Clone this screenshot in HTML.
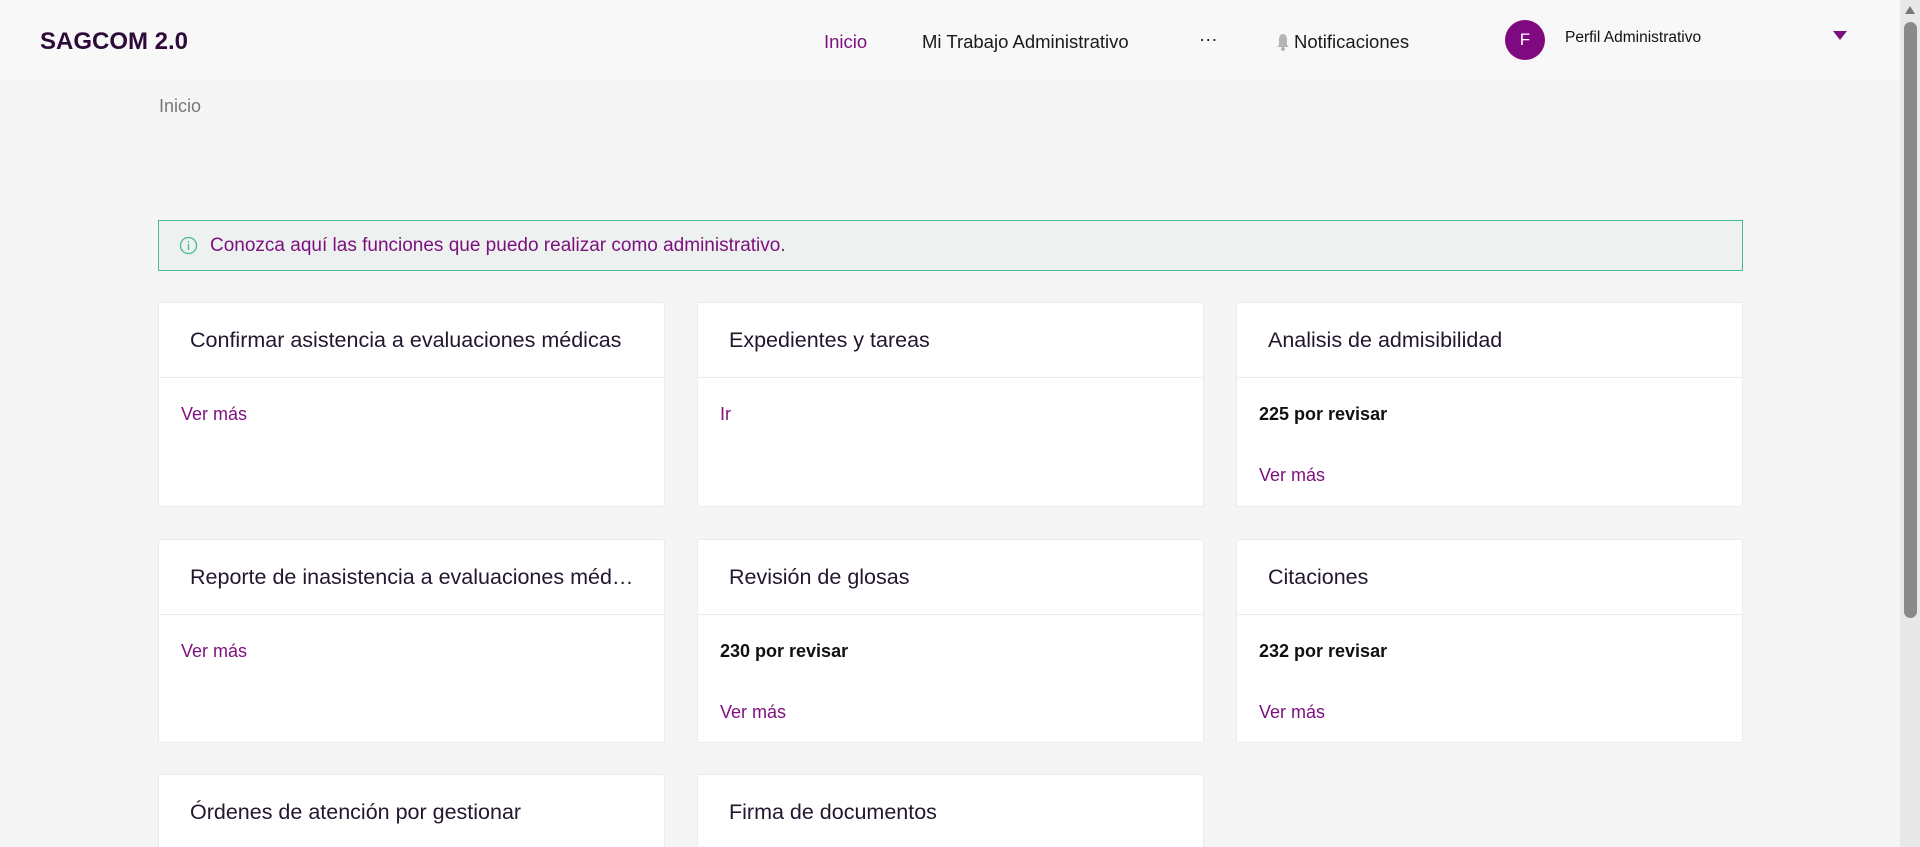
<!DOCTYPE html>
<html style="overflow:hidden;height:847px"><head><meta charset="utf-8"><style>
*{box-sizing:border-box;margin:0;padding:0}
body{width:1920px;height:847px;overflow:hidden;background:#f5f5f5;font-family:"Liberation Sans",sans-serif;position:relative}
.hdr{position:absolute;left:0;top:0;width:1900px;height:80px;background:#f8f8f8}
.abs{position:absolute;white-space:nowrap}
.logo{left:40px;top:28px;font-size:24px;font-weight:bold;color:#2d0a3a}
.nav{top:31px;font-size:18.5px;color:#1a1a1a}
.av{left:1505px;top:20px;width:40px;height:40px;border-radius:50%;background:#7f0a80;color:#fff;font-size:17px;text-align:center;line-height:40px}
.sb{position:absolute;right:0;top:0;width:20px;height:847px;background:#e8e8e8}
.thumb{position:absolute;right:3px;top:22px;width:13px;height:596px;background:#8a8a8a;border-radius:7px}
.alert{position:absolute;left:158px;top:220px;width:1585px;height:51px;background:#edf1ef;border:1px solid #4cb88f}
.card{position:absolute;width:507px;background:#fff;border:1px solid #ebebeb;border-radius:3px}
.card .t{height:75px;border-bottom:1px solid #ebebeb;padding-left:31px;line-height:74px;font-size:21.5px;color:#23162e;white-space:nowrap;overflow:hidden;text-overflow:ellipsis;padding-right:28px}
.card .b{padding:26px 22px;font-size:18px}
.lk{color:#7d0f7f}
.bd{font-weight:bold;color:#111;margin-bottom:40px}
</style></head><body>
<div class="hdr">
<div class="abs logo">SAGCOM 2.0</div>
<div class="abs nav" style="left:824px;color:#7d0f7f">Inicio</div>
<div class="abs nav" style="left:922px">Mi Trabajo Administrativo</div>
<div class="abs nav" style="left:1199px;top:28px">···</div>
<svg class="abs" style="left:1276px;top:33px" width="14" height="18" viewBox="0 0 14 18"><path d="M7 1C4 1 3 4 3 7v5l-2 2h12l-2-2V7c0-3-1-6-4-6z" fill="#b5b5b5"/><circle cx="7" cy="16" r="2" fill="#b5b5b5"/></svg>
<div class="abs nav" style="left:1294px">Notificaciones</div>
<div class="abs av">F</div>
<div class="abs" style="left:1565px;top:29px;font-size:15.5px;color:#111">Perfil Administrativo</div>
<svg class="abs" style="left:1833px;top:31px" width="14" height="10"><path d="M0 0h14L7 9z" fill="#7d0f7f"/></svg>
</div>
<div class="abs" style="left:159px;top:96px;font-size:18px;color:#777">Inicio</div>
<div class="alert">
<svg class="abs" style="left:20px;top:15px" width="19" height="19" viewBox="0 0 19 19"><circle cx="9.5" cy="9.5" r="8" fill="none" stroke="#4cb88f" stroke-width="1.3"/><path d="M9.5 8v6M9.5 5v1.5" stroke="#4cb88f" stroke-width="1.4"/></svg>
<div class="abs" style="left:51px;top:14px;font-size:19px;color:#7d0f7f">Conozca aquí las funciones que puedo realizar como administrativo.</div>
</div>

<div class="card" style="left:158px;top:302px;height:205px"><div class="t">Confirmar asistencia a evaluaciones médicas</div><div class="b"><div class="lk">Ver más</div></div></div>
<div class="card" style="left:697px;top:302px;height:205px"><div class="t">Expedientes y tareas</div><div class="b"><div class="lk">Ir</div></div></div>
<div class="card" style="left:1236px;top:302px;height:205px"><div class="t">Analisis de admisibilidad</div><div class="b"><div class="bd">225 por revisar</div><div class="lk">Ver más</div></div></div>

<div class="card" style="left:158px;top:539px;height:204px"><div class="t">Reporte de inasistencia a evaluaciones médicas</div><div class="b"><div class="lk">Ver más</div></div></div>
<div class="card" style="left:697px;top:539px;height:204px"><div class="t">Revisión de glosas</div><div class="b"><div class="bd">230 por revisar</div><div class="lk">Ver más</div></div></div>
<div class="card" style="left:1236px;top:539px;height:204px"><div class="t">Citaciones</div><div class="b"><div class="bd">232 por revisar</div><div class="lk">Ver más</div></div></div>

<div class="card" style="left:158px;top:774px;height:80px;border-bottom:none"><div class="t">Órdenes de atención por gestionar</div></div>
<div class="card" style="left:697px;top:774px;height:80px;border-bottom:none"><div class="t">Firma de documentos</div></div>

<div class="sb"><svg style="position:absolute;left:5px;top:6px" width="10" height="8"><path d="M5 0L10 8H0z" fill="#777"/></svg><div class="thumb"></div></div>
</body></html>
